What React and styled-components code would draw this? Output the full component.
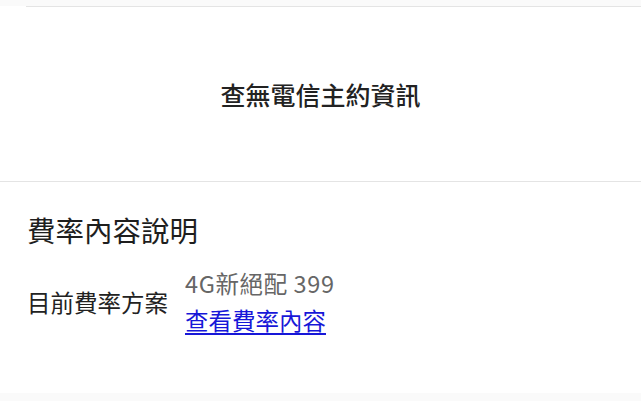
import React from "react";
import styled, { createGlobalStyle } from "styled-components";

const GlobalStyle = createGlobalStyle`
  html, body { margin: 0; padding: 0; background: #ffffff; }
  body {
    font-family: "Noto Sans CJK TC", "Noto Sans", "Liberation Sans", sans-serif;
    color: #222222;
    -webkit-font-smoothing: antialiased;
  }
`;

const Page = styled.div`
  width: 641px;
  height: 401px;
  display: flex;
  flex-direction: column;
  overflow: hidden;
  background: #ffffff;
`;

const TopTail = styled.div`
  height: 6px;
  background: #fafafa;
`;

const Divider = styled.div`
  height: 1px;
  margin-left: ${(p) => p.$inset || 0}px;
  background: #e4e4e4;
`;

const EmptyBlock = styled.div`
  height: 174px;
  display: flex;
  align-items: center;
  justify-content: center;
`;

const EmptyText = styled.div`
  font-size: 25px;
  font-weight: 500;
  color: #222222;
  line-height: 1;
`;

const Section = styled.section`
  padding: 28px 26px 0 27px;
  display: flex;
  flex-direction: column;
  flex: 1;
`;

const Heading = styled.h2`
  margin: 0;
  font-size: 28.5px;
  font-weight: 400;
  line-height: 40px;
  color: #1e1e1e;
`;

const Row = styled.div`
  margin-top: 15px;
  display: flex;
  align-items: center;
`;

const Label = styled.div`
  width: 158px;
  flex: none;
  font-size: 23.5px;
  line-height: 36px;
  color: #222222;
`;

const ValueCol = styled.div`
  display: flex;
  flex-direction: column;
  gap: 1px;
`;

const Value = styled.div`
  font-size: 23.5px;
  line-height: 36px;
  letter-spacing: 0.6px;
  color: #666666;
`;

const Link = styled.a`
  font-size: 23.5px;
  line-height: 36px;
  color: #1717d8;
  text-decoration: underline;
  text-underline-offset: 3px;
  text-decoration-thickness: 1.5px;
  cursor: pointer;
`;

const BottomTail = styled.div`
  height: 8px;
  background: #fafafa;
`;

export default function App() {
  return (
    <>
      <GlobalStyle />
      <Page>
        <TopTail />
        <Divider $inset={26} />
        <EmptyBlock>
          <EmptyText>查無電信主約資訊</EmptyText>
        </EmptyBlock>
        <Divider $inset={0} />
        <Section>
          <Heading>費率內容說明</Heading>
          <Row>
            <Label>目前費率方案</Label>
            <ValueCol>
              <Value>4G新絕配 399</Value>
              <Link href="#">查看費率內容</Link>
            </ValueCol>
          </Row>
        </Section>
        <BottomTail />
      </Page>
    </>
  );
}
